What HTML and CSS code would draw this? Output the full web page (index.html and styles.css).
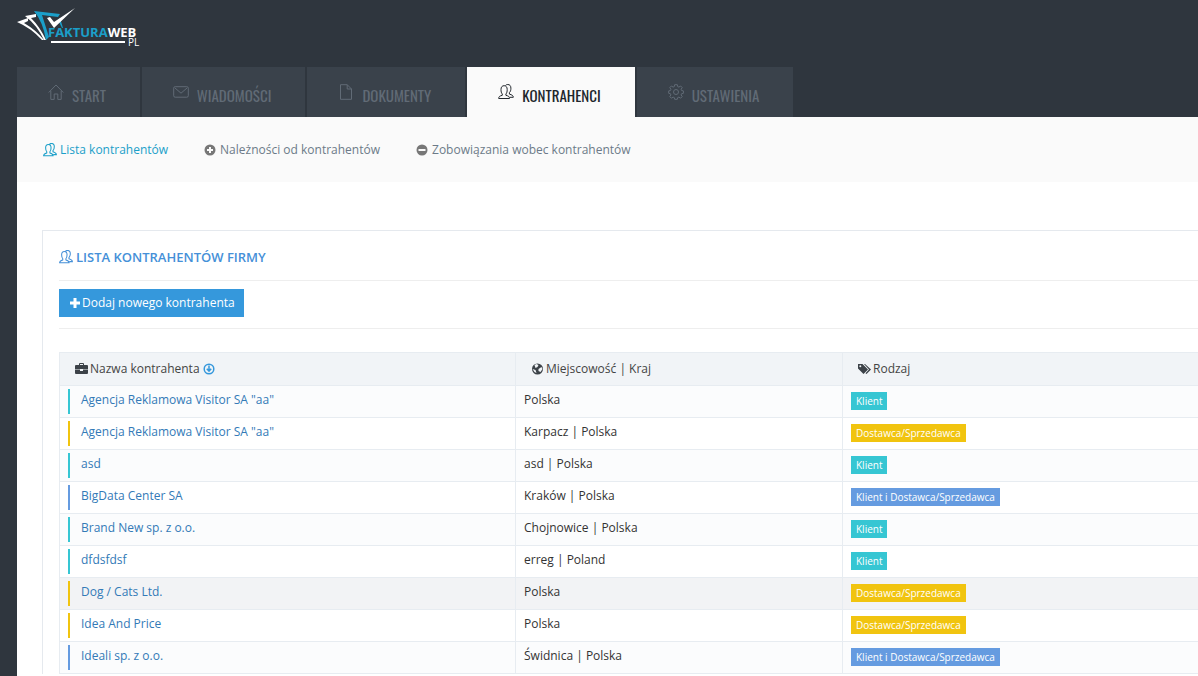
FILE: index.html
```html
<!DOCTYPE html>
<html lang="pl">
<head>
<meta charset="utf-8">
<title>Kontrahenci - FakturaWeb.pl</title>
<link rel="stylesheet" href="styles.css">
</head>
<body>
<svg class="symbols" aria-hidden="true">
  <symbol id="users" viewBox="0 0 16 16"><path d="M.7 14.500c0-2 1-2.500 3.600-3.200V10C3.300 9 3 7.500 3 5.500 3 3 4.200 1.700 6.100 1.700S9.200 3 9.200 5.500c0 2-.3 3.500-1.300 4.500v1.300c2.600.7 3.600 1.200 3.600 3.200zM7.500 1.500C8 .8 8.800.5 9.800.5c2 0 3.100 1.400 3.100 3.700 0 2-.4 3.400-1.500 4.400v1.500c2.600.8 3.900 1.400 3.900 3.200h-3.500"/></symbol>
  <symbol id="home" viewBox="0 0 16 16"><path d="M.7 8.500 8 1l7.300 7.500M2.800 7v8.400h3.400V10h3.600v5.400h3.400V7"/></symbol>
  <symbol id="mail" viewBox="0 0 16 16"><rect x=".7" y="2.700" width="14.600" height="10.500" rx="1.500"/><path d="m2 4 6 5.200L14 4"/></symbol>
  <symbol id="file" viewBox="0 0 16 16"><path d="M2.500.7h6.700L13.500 5v10.300h-11zM9.200.7V5h4.300"/></symbol>
  <symbol id="gear" viewBox="0 0 16 16"><circle cx="8" cy="8" r="2.500"/><path d="M6.700.7h2.600l.4 1.900 1.200.5 1.700-1.100 1.600 1.600-1.100 1.700.5 1.200 1.800.4v2.400l-1.800.4-.5 1.200 1.100 1.700-1.600 1.600-1.700-1.100-1.200.5-.4 1.700H6.700l-.4-1.700-1.200-.5-1.700 1.100-1.600-1.600 1.100-1.700-.5-1.200-1.700-.4V6.900l1.700-.4.5-1.200-1.100-1.700L3.400 2l1.700 1.100 1.200-.5z"/></symbol>
</svg>
<header class="header">
  <a class="logo" href="#" aria-label="FakturaWeb.pl">
    <svg width="128" height="42" viewBox="0 0 128 42">
      <path class="logo-white" d="m0 14 11-4v3l-4 2q12 7 20 17h-2Q14 20 0 14z"/>
      <path class="logo-white" d="m8 8 11-2v3l-5 1q9 9 15 22h-2Q20 17 8 8z"/>
      <path class="logo-blue" d="m17 3 26 3-2 3-16-2 7 22-3 3Q26 14 17 3z"/>
      <path class="logo-blue" d="m41 12 2-2 3 10h-1z"/>
      <path class="logo-white" d="m30 10 3-1 4 5L58 0 37 20z"/>
      <text class="logo-text logo-blue" x="31" y="29">FAKTURA<tspan class="logo-white">WEB</tspan></text>
      <path class="logo-white" d="M34 33h74v2H34z"/>
      <text class="logo-pl logo-white" x="111" y="38">PL</text>
    </svg>
  </a>
  <nav class="tabs" aria-label="Menu">
    <a class="tab" href="#"><svg class="line-icon"><use href="#home"/></svg>START</a>
    <a class="tab" href="#"><svg class="line-icon"><use href="#mail"/></svg>WIADOMOŚCI</a>
    <a class="tab" href="#"><svg class="line-icon"><use href="#file"/></svg>DOKUMENTY</a>
    <a class="tab tab-active" href="#"><svg class="line-icon"><use href="#users"/></svg>KONTRAHENCI</a>
    <a class="tab" href="#"><svg class="line-icon"><use href="#gear"/></svg>USTAWIENIA</a>
  </nav>
</header>
<main class="content">
  <nav class="subnav" aria-label="Kontrahenci">
    <a class="subnav-active" href="#"><svg class="small-icon outline"><use href="#users"/></svg>Lista kontrahentów</a>
    <a href="#"><svg class="round-icon" viewBox="0 0 12 12"><circle cx="6" cy="6" r="5.500"/><path class="cut" d="M6 3v6M3 6h6"/></svg>Należności od kontrahentów</a>
    <a href="#"><svg class="round-icon" viewBox="0 0 12 12"><circle cx="6" cy="6" r="5.500"/><path class="cut" d="M2.500 6h7"/></svg>Zobowiązania wobec kontrahentów</a>
  </nav>
  <section class="panel">
    <h1 class="title"><svg class="small-icon outline"><use href="#users"/></svg>LISTA KONTRAHENTÓW FIRMY</h1>
    <div class="toolbar">
      <button class="add" type="button"><svg class="plus" viewBox="0 0 10 10"><path d="M5 0v10M0 5h10"/></svg>Dodaj nowego kontrahenta</button>
    </div>
    <table class="list">
      <thead><tr>
        <th class="col-name"><span class="head"><svg class="head-icon" viewBox="0 0 13 12"><path d="M4 2V1q0-1 1-1h3q1 0 1 1v1h3q1 0 1 1v3.500H8V6H5v.5H0V3q0-1 1-1zm1 0h3V1H5zM0 7h5v1h3V7h5v3q0 1-1 1H1q-1 0-1-1z"/></svg>Nazwa kontrahenta<svg class="sort" viewBox="0 0 12 12"><circle cx="6" cy="6" r="4.800"/><path d="M6 2.500v5M3.800 5.800 6 8.200l2.200-2.400"/></svg></span></th>
        <th class="col-place"><span class="head"><svg class="head-icon" viewBox="0 0 12 12"><circle cx="6" cy="6" r="5.500"/><path class="land" d="m3 2 2-1 2 1-1 2-2 1zM7 6l3-2 1 2-2 3-2-1zM1 6l3 1 1 3-2-1z"/></svg>Miejscowość | Kraj</span></th>
        <th><span class="head"><svg class="head-icon" viewBox="0 0 13 12"><path d="M0 1h4.500L10 6.500 5.500 11 0 5.500zM6 1h1l6 5.500L8.500 11l-1-.8L11 6.500z"/><circle class="land" cx="2.300" cy="3.200" r="1"/></svg>Rodzaj</span></th>
      </tr></thead>
      <tbody>
        <tr><td><a class="name client" href="#">Agencja Reklamowa Visitor SA "aa"</a></td><td>Polska</td><td><span class="badge client">Klient</span></td></tr>
        <tr><td><a class="name supplier" href="#">Agencja Reklamowa Visitor SA "aa"</a></td><td>Karpacz | Polska</td><td><span class="badge supplier">Dostawca/Sprzedawca</span></td></tr>
        <tr><td><a class="name client" href="#">asd</a></td><td>asd | Polska</td><td><span class="badge client">Klient</span></td></tr>
        <tr><td><a class="name both" href="#">BigData Center SA</a></td><td>Kraków | Polska</td><td><span class="badge both">Klient i Dostawca/Sprzedawca</span></td></tr>
        <tr><td><a class="name client" href="#">Brand New sp. z o.o.</a></td><td>Chojnowice | Polska</td><td><span class="badge client">Klient</span></td></tr>
        <tr><td><a class="name client" href="#">dfdsfdsf</a></td><td>erreg | Poland</td><td><span class="badge client">Klient</span></td></tr>
        <tr class="hovered"><td><a class="name supplier" href="#">Dog / Cats Ltd.</a></td><td>Polska</td><td><span class="badge supplier">Dostawca/Sprzedawca</span></td></tr>
        <tr><td><a class="name supplier" href="#">Idea And Price</a></td><td>Polska</td><td><span class="badge supplier">Dostawca/Sprzedawca</span></td></tr>
        <tr><td><a class="name both" href="#">Ideali sp. z o.o.</a></td><td>Świdnica | Polska</td><td><span class="badge both">Klient i Dostawca/Sprzedawca</span></td></tr>
      </tbody>
    </table>
  </section>
</main>
</body>
</html>
```
FILE: styles.css
```css
* { box-sizing: border-box; }
body {
  margin: 0;
  padding-left: 17px;
  background: #2f363e;
  color: #333;
  font: 12px/18px "Open Sans", sans-serif;
}
a { text-decoration: none; }
svg { flex: none; }
.symbols { display: none; }
.header { display: flex; flex-direction: column; }
.logo { height: 67px; padding-top: 8px; }
.logo svg { display: block; }
.logo-white { fill: #fff; }
.logo-blue { fill: #1b9fc9; }
.logo-text { font: 700 13px "Open Sans", sans-serif; }
.logo-pl { font: 400 10px "Open Sans", sans-serif; }

.tabs { display: flex; gap: 2px; }
.tab {
  display: flex;
  align-items: center;
  gap: 8px;
  height: 50px;
  padding: 6px 34px 0 31px;
  background: #3a424b;
  color: #616b76;
  font: 400 15px/24px Oswald, "Roboto Condensed", "Liberation Sans Narrow", sans-serif;
}
.line-icon {
  width: 16px;
  height: 16px;
  margin-bottom: 6px;
  fill: none;
  stroke: currentColor;
}
.tab-active { background: #fafafa; color: #21262c; }

.content { background: #fff; min-height: calc(100vh - 117px); }
.subnav {
  display: flex;
  gap: 36px;
  height: 65px;
  padding: 0 26px;
  align-items: center;
  background: #fafafa;
}
.subnav a { display: flex; align-items: center; gap: 4px; color: #6c7a88; }
.subnav .subnav-active { gap: 3px; color: #1b9fc9; }
.small-icon { width: 14px; height: 14px; }
.outline { fill: none; stroke: currentColor; stroke-width: 1.200; }
.round-icon { width: 12px; height: 12px; fill: #777; }
.cut { fill: none; stroke: #fafafa; stroke-width: 2; }

.panel {
  margin: 48px 0 0 25px;
  padding: 0 0 0 16px;
  border: 1px solid #e5e9ee;
  border-width: 1px 0 0 1px;
}
.title {
  display: flex;
  align-items: center;
  gap: 3px;
  height: 50px;
  margin: 0;
  padding-top: 3px;
  border-bottom: 1px solid #eee;
  color: #4590d8;
  font-size: 13px;
  font-weight: 600;
}
.toolbar { padding: 8px 0 11px; border-bottom: 1px solid #eee; }
.add {
  display: flex;
  align-items: center;
  gap: 2px;
  height: 28px;
  padding: 0 9px 0 11px;
  border: 0;
  background: #3598dc;
  color: #fff;
  font: inherit;
}
.plus { width: 10px; height: 10px; fill: none; stroke: #fff; stroke-width: 3; }

.list {
  width: 100%;
  margin-top: 23px;
  border-collapse: collapse;
  table-layout: fixed;
}
.col-name { width: 456px; }
.col-place { width: 327px; }
.list th, .list td { border: 1px solid #e7ecf1; border-right: 0; text-align: left; }
.list th { height: 33px; padding: 0 15px; background: #f1f4f7; color: #444; font-weight: 400; }
.list td { height: 32px; padding: 0 8px 1px; vertical-align: middle; }
.list tbody td:nth-child(2) { padding-bottom: 4px; }
.list tbody tr:nth-child(odd) { background: #fbfcfd; }
.list tbody tr.hovered { background: #f2f3f5; }
.head { display: flex; align-items: center; gap: 2px; }
.head-icon { width: 13px; height: 12px; fill: #3c4248; }
.land { fill: #f1f4f7; }
.sort { width: 12px; height: 12px; margin-left: 1px; fill: none; stroke: #3598dc; stroke-width: 1.500; }
.name {
  display: block;
  height: 25px;
  padding-left: 11px;
  border-left: 2px solid;
  color: #337ab7;
  line-height: 22px;
}
.name.client { border-color: #36c6d3; }
.name.supplier { border-color: #f1c40f; }
.name.both { border-color: #659be0; }
.badge {
  display: block;
  width: max-content;
  height: 18px;
  padding: 0 5px;
  color: #fff;
  font-size: 10px;
  line-height: 19px;
}
.badge.client { background: #36c6d3; }
.badge.supplier { background: #f1c40f; }
.badge.both { background: #659be0; }
```
